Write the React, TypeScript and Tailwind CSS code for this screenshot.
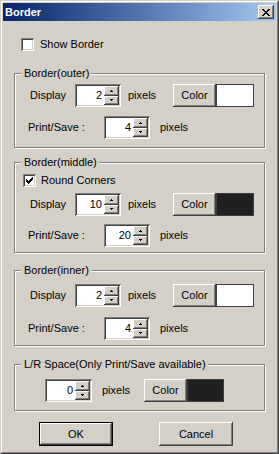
import React from "react";

const raised =
  "shadow-[inset_-1px_-1px_#404040,inset_1px_1px_#ffffff,inset_-2px_-2px_#808080,inset_2px_2px_#d4d0c8]";
const sunken =
  "shadow-[inset_1px_1px_#808080,inset_-1px_-1px_#ffffff,inset_2px_2px_#404040,inset_-2px_-2px_#d4d0c8]";

function UpArrow() {
  return (
    <svg width="5" height="3" viewBox="0 0 5 3" shapeRendering="crispEdges">
      <rect x="2" y="0" width="1" height="1" fill="#000" />
      <rect x="1" y="1" width="3" height="1" fill="#000" />
    </svg>
  );
}
function DownArrow() {
  return (
    <svg width="5" height="3" viewBox="0 0 5 3" shapeRendering="crispEdges">
      <rect x="1" y="0" width="3" height="1" fill="#000" />
      <rect x="2" y="1" width="1" height="1" fill="#000" />
    </svg>
  );
}

function Spinner({ value, w }: { value: string; w: string }) {
  return (
    <div className={`flex h-[23px] ${w} bg-white p-[2px] ${sunken}`}>
      <div className="flex-1 pr-[2px] text-right leading-[19px]">{value}</div>
      <div className="flex w-[15px] flex-col">
        <div className={`flex h-[10px] items-center justify-center bg-[#d4d0c8] ${raised}`}>
          <UpArrow />
        </div>
        <div className={`flex h-[9px] items-center justify-center bg-[#d4d0c8] ${raised}`}>
          <DownArrow />
        </div>
      </div>
    </div>
  );
}

function Check({ checked }: { checked?: boolean }) {
  return (
    <div className={`flex h-[13px] w-[13px] shrink-0 items-center justify-center bg-white ${sunken}`}>
      {checked && (
        <svg width="7" height="7" viewBox="0 0 7 7" shapeRendering="crispEdges">
          <rect x="6" y="0" width="1" height="1" fill="#000" />
          <rect x="5" y="1" width="2" height="1" fill="#000" />
          <rect x="0" y="2" width="1" height="1" fill="#000" />
          <rect x="4" y="2" width="3" height="1" fill="#000" />
          <rect x="0" y="3" width="2" height="1" fill="#000" />
          <rect x="3" y="3" width="3" height="1" fill="#000" />
          <rect x="0" y="4" width="5" height="1" fill="#000" />
          <rect x="1" y="5" width="3" height="1" fill="#000" />
          <rect x="2" y="6" width="1" height="1" fill="#000" />
        </svg>
      )}
    </div>
  );
}

function Group({
  title,
  className,
  children,
}: {
  title: string;
  className: string;
  children: React.ReactNode;
}) {
  return (
    <div
      className={`relative mx-[11px] border border-[#808080] shadow-[inset_1px_1px_#ffffff,1px_1px_#ffffff] ${className}`}
    >
      <span className="absolute -top-[7px] left-[6px] bg-[#d4d0c8] pl-[3px] pr-[2px] leading-[13px]">
        {title}
      </span>
      {children}
    </div>
  );
}

function ColorPair({ dark, swatchW }: { dark?: boolean; swatchW: string }) {
  return (
    <div className="flex h-[23px]">
      <div
        className={`flex h-[23px] w-[43px] items-center justify-center bg-[#d4d0c8] ${raised}`}
      >
        Color
      </div>
      <div
        className={`h-[23px] ${swatchW} border border-[#404040] ${
          dark ? "bg-[#202020]" : "bg-white"
        }`}
      />
    </div>
  );
}

function DisplayRow({ value, dark, className }: { value: string; dark?: boolean; className: string }) {
  return (
    <div className={`flex h-[23px] items-center ${className}`}>
      <div className="w-[60px] pl-[15px]">Display</div>
      <Spinner value={value} w="w-[46px]" />
      <div className="w-[52px] pl-[7px]">pixels</div>
      <ColorPair dark={dark} swatchW="w-[38px]" />
    </div>
  );
}

function PrintRow({ value, className }: { value: string; className: string }) {
  return (
    <div className={`flex h-[23px] items-center ${className}`}>
      <div className="w-[89px] pl-[13px]">Print/Save :</div>
      <Spinner value={value} w="w-[46px]" />
      <div className="pl-[10px]">pixels</div>
    </div>
  );
}

export default function App() {
  return (
    <div className="h-[454px] w-[279px] select-none border border-b-[#404040] border-l-[#d4d0c8] border-r-[#404040] border-t-[#d4d0c8] bg-[#d4d0c8] font-['Liberation_Sans',Arial,sans-serif] text-[11px] leading-[13px] text-black">
      <div className="flex h-full flex-col border border-b-[#808080] border-l-white border-r-[#808080] border-t-white p-px">
        {/* Title bar */}
        <div className="flex h-[18px] items-center bg-linear-to-r from-[#0a246a] to-[#a6caf0] pl-[2px] pr-[2px]">
          <span className="flex-1 font-bold text-white">Border</span>
          <div className={`flex h-[14px] w-[16px] items-center justify-center bg-[#d4d0c8] ${raised}`}>
            <svg width="8" height="7" viewBox="0 0 8 7" shapeRendering="crispEdges">
              <rect x="0" y="0" width="2" height="1" fill="#000" />
              <rect x="6" y="0" width="2" height="1" fill="#000" />
              <rect x="1" y="1" width="2" height="1" fill="#000" />
              <rect x="5" y="1" width="2" height="1" fill="#000" />
              <rect x="2" y="2" width="4" height="1" fill="#000" />
              <rect x="3" y="3" width="2" height="1" fill="#000" />
              <rect x="2" y="4" width="4" height="1" fill="#000" />
              <rect x="1" y="5" width="2" height="1" fill="#000" />
              <rect x="5" y="5" width="2" height="1" fill="#000" />
              <rect x="0" y="6" width="2" height="1" fill="#000" />
              <rect x="6" y="6" width="2" height="1" fill="#000" />
            </svg>
          </div>
        </div>

        {/* Show Border */}
        <div className="ml-[18px] mt-[17px] flex items-center gap-[6px]">
          <Check />
          <span>Show Border</span>
        </div>

        <Group title="Border(outer)" className="mt-[22px] h-[75px]">
          <DisplayRow value="2" className="mt-[10px]" />
          <PrintRow value="4" className="mt-[9px]" />
        </Group>

        <Group title="Border(middle)" className="mt-[14px] h-[91px]">
          <div className="ml-[8px] mt-[11px] flex items-center gap-[5px]">
            <Check checked />
            <span>Round Corners</span>
          </div>
          <DisplayRow value="10" dark className="mt-[6px]" />
          <PrintRow value="20" className="mt-[8px]" />
        </Group>

        <Group title="Border(inner)" className="mt-[17px] h-[76px]">
          <DisplayRow value="2" className="mt-[13px]" />
          <PrintRow value="4" className="mt-[10px]" />
        </Group>

        <Group title="L/R Space(Only Print/Save available)" className="mt-[18px] h-[47px]">
          <div className="mt-[14px] flex h-[23px] items-center">
            <div className="w-[30px]" />
            <Spinner value="0" w="w-[47px]" />
            <div className="w-[52px] pl-[10px]">pixels</div>
            <ColorPair dark swatchW="w-[37px]" />
          </div>
        </Group>

        <div className="ml-[36px] mt-[11px] flex gap-[46px]">
          <div className="h-[24px] w-[74px] border border-black">
            <div className={`flex h-full w-full items-center justify-center ${raised}`}>OK</div>
          </div>
          <div className={`flex h-[24px] w-[74px] items-center justify-center ${raised}`}>
            Cancel
          </div>
        </div>
      </div>
    </div>
  );
}
